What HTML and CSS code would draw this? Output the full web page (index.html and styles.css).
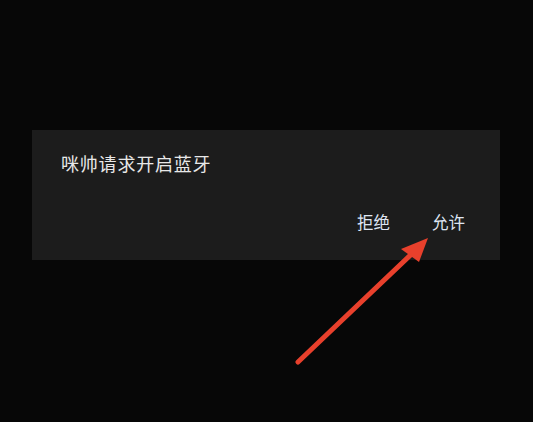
FILE: index.html
```html
<!DOCTYPE html>
<html lang="zh-CN">
<head>
<meta charset="utf-8">
<link rel="stylesheet" href="styles.css">
</head>
<body>
<div class="screen">
  <div class="dialog">
    <div class="title">咪帅请求开启蓝牙</div>
    <div class="actions">
      <span class="btn">拒绝</span>
      <span class="btn">允许</span>
    </div>
  </div>
  <svg class="arrow" width="533" height="422" viewBox="0 0 533 422">
    <line x1="298" y1="362" x2="420" y2="246" stroke="#e8402c" stroke-width="5" stroke-linecap="round"/>
    <polygon points="428,238 401,249 419,262" fill="#e8402c"/>
  </svg>
</div>
</body>
</html>
```
FILE: styles.css
```css
html, body {
  margin: 0;
  padding: 0;
  background: #070707;
}
.screen {
  position: relative;
  width: 533px;
  height: 422px;
  padding-top: 130px;
  box-sizing: border-box;
  font-family: "Noto Sans CJK SC", "Noto Sans", sans-serif;
}
.dialog {
  margin-left: 32px;
  width: 468px;
  height: 130px;
  background: #1c1c1c;
  box-sizing: border-box;
  padding: 20px 35px 0 29px;
  display: flex;
  flex-direction: column;
}
.title {
  color: #e8e8e8;
  font-size: 18px;
  line-height: 26px;
  letter-spacing: 0.8px;
}
.actions {
  margin-top: 34px;
  display: flex;
  justify-content: flex-end;
  gap: 42px;
}
.btn {
  color: #dfe5f2;
  font-size: 16.5px;
  line-height: 24px;
}
.arrow {
  position: absolute;
  left: 0;
  top: 0;
}
```
